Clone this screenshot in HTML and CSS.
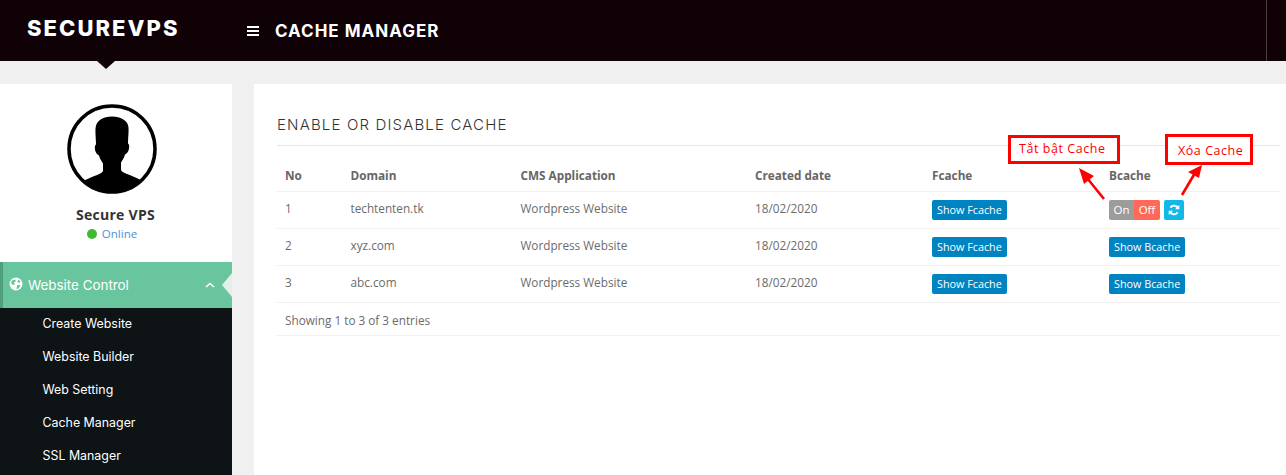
FILE: index.html
```html
<!DOCTYPE html>
<html lang="vi">
<head>
<meta charset="utf-8">
<title>Cache Manager</title>
<link rel="stylesheet" href="styles.css">
</head>
<body>
<header class="topbar">
  <div class="brand">SECUREVPS</div>
  <svg class="burger" viewBox="0 0 12 10" width="12" height="10"><path d="M0 1h12M0 5h12M0 9h12" stroke="#fff" stroke-width="2"/></svg>
  <div class="page-title">CACHE MANAGER</div>
  <div class="top-divider"></div>
</header>
<div class="layout">
  <aside class="sidebar">
    <div class="profile">
      <svg class="avatar" viewBox="0 0 90 90" width="90" height="90">
        <defs><clipPath id="avatar-clip"><circle cx="45" cy="45" r="43"/></clipPath></defs>
        <circle cx="45" cy="45" r="43" fill="#fff" stroke="#000" stroke-width="3.5"/>
        <path clip-path="url(#avatar-clip)" fill="#000" d="M45 12.500c-9 0-16 4-16.500 12-.3 5 .5 11 .5 16-1.500 1-1.500 4-.5 7 .7 2 2 3 3.500 4 1 4 3 6 4 8v7c0 2-3 3-6 4.500-5 2-11 4-15 7v14h60V77c-4-3-10-5-15-7-3-1.500-6-2.500-6-4.500v-7c1-2 3-4 4-8 1.500-1 2.800-2 3.500-4 1-3 1-6-.5-7 0-5 .8-11 .5-16C61 16.500 54 12.500 45 12.500z"/>
      </svg>
      <div class="profile-name">Secure VPS</div>
      <div class="profile-status"><span class="status-dot"></span>Online</div>
    </div>
    <nav class="menu">
      <div class="menu-head">
        <svg class="globe" viewBox="0 0 14 14" width="14" height="14"><circle cx="7" cy="7" r="6.500" fill="#fff"/><path fill="#68c59e" d="M3 3.500l3-1 1 1.500-2 1.500 1 2-2 .5-2-2zM9 2.500l2.500 2-1 1.500-2-1zM8 8l3.500 0-1.500 3-2.500 1.500z"/></svg>
        <span class="menu-label">Website Control</span>
        <svg class="chevron" viewBox="0 0 10 6" width="10" height="6"><path d="M1 5l4-3.500L9 5" fill="none" stroke="#fff" stroke-width="1.600"/></svg>
      </div>
      <ul class="submenu">
        <li>Create Website</li>
        <li>Website Builder</li>
        <li>Web Setting</li>
        <li>Cache Manager</li>
        <li>SSL Manager</li>
      </ul>
    </nav>
  </aside>
  <main class="panel">
    <h1 class="panel-title">ENABLE OR DISABLE CACHE</h1>
    <table class="data">
      <colgroup>
        <col class="c-no"><col class="c-domain"><col class="c-cms"><col class="c-date"><col class="c-f"><col>
      </colgroup>
      <thead>
        <tr><th>No</th><th>Domain</th><th>CMS Application</th><th>Created date</th><th>Fcache</th><th>Bcache</th></tr>
      </thead>
      <tbody>
        <tr><td>1</td><td>techtenten.tk</td><td>Wordpress Website</td><td>18/02/2020</td><td><span class="btn">Show Fcache</span></td>
          <td><div class="controls"><span class="toggle"><span class="on">On</span><span class="off">Off</span></span>
          <span class="refresh"><svg viewBox="0 0 12 12" width="12" height="12"><path d="M10.300 4.600A4.500 4.500 0 0 0 2.400 3.600M1.700 7.400A4.500 4.500 0 0 0 9.600 8.400" fill="none" stroke="#fff" stroke-width="1.900"/><path d="M11.300 1v4.300H7zM.7 11V6.700H5z" fill="#fff"/></svg></span></div></td></tr>
        <tr><td>2</td><td>xyz.com</td><td>Wordpress Website</td><td>18/02/2020</td><td><span class="btn">Show Fcache</span></td><td><span class="btn">Show Bcache</span></td></tr>
        <tr><td>3</td><td>abc.com</td><td>Wordpress Website</td><td>18/02/2020</td><td><span class="btn">Show Fcache</span></td><td><span class="btn">Show Bcache</span></td></tr>
      </tbody>
      <tfoot>
        <tr><td colspan="6">Showing 1 to 3 of 3 entries</td></tr>
      </tfoot>
    </table>
  </main>
</div>
<div class="note note-toggle">Tắt bật Cache</div>
<div class="note note-clear">Xóa Cache</div>
<svg class="arrows" width="1286" height="475" viewBox="0 0 1286 475">
  <path d="M1104 199L1087 178" stroke="#f00" stroke-width="2.600"/>
  <path d="M1079 168L1094 176 1084 184z" fill="#f00"/>
  <path d="M1182 195L1195 173" stroke="#f00" stroke-width="2.600"/>
  <path d="M1202 165L1199 178 1188 172z" fill="#f00"/>
</svg>
</body>
</html>
```
FILE: styles.css
```css
* { box-sizing: border-box; }
html, body { margin: 0; height: 475px; overflow: hidden; }
body { background: #f0f0f0; font-family: "Open Sans", sans-serif; color: #6b6b6b; position: relative; }

.topbar { height: 61px; background: #100106; color: #fff; display: flex; align-items: center; position: relative; }
.topbar::after { content: ""; position: absolute; left: 97px; top: 61px; border: 9px solid transparent; border-top: 8px solid #100106; border-bottom: 0; }
.brand { font-family: Inter, sans-serif; font-weight: 800; font-size: 22px; letter-spacing: 2.050px; margin-left: 27px; width: 220px; position: relative; top: -3px; white-space: nowrap; }
.burger { margin-right: 16px; }
.page-title { font-family: Inter, sans-serif; font-weight: 700; font-size: 17px; letter-spacing: 1px; flex: 1; }
.top-divider { width: 1px; height: 61px; background: #4a3d43; margin-right: 19px; }

.layout { display: grid; grid-template-columns: 232px 1fr; column-gap: 22px; padding-top: 23px; }
.sidebar { background: #fff; height: 391px; display: flex; flex-direction: column; }
.profile { height: 178px; display: flex; flex-direction: column; align-items: center; padding-top: 20px; }
.avatar { display: block; margin-right: 8px; }
.profile-name { font-weight: 700; font-size: 14px; color: #333; margin-top: 11px; line-height: 19px; letter-spacing: .3px; margin-right: 1px; }
.profile-status { font-size: 11.500px; color: #4a90d9; line-height: 16px; margin-top: 2px; margin-right: 8px; display: flex; align-items: center; }
.status-dot { width: 10px; height: 10px; border-radius: 50%; background: #3dba30; margin-right: 5px; }

.menu { flex: 1; background: #0e1316; }
.menu-head { height: 46px; background: #68c59e; border-left: 3px solid #4f9e7c; display: flex; align-items: center; color: #fff; position: relative; padding-left: 6px; }
.menu-head::after { content: ""; position: absolute; right: 0; top: 11px; border: 12px solid transparent; border-left: 0; border-right: 10px solid #e4eeea; }
.globe { margin-right: 5px; margin-top: -3px; }
.menu-label { font-family: Inter, sans-serif; font-size: 13.400px; flex: 1; }
.chevron { margin-right: 17px; }
.submenu { list-style: none; margin: 0; padding: 0 0 0 42.500px; color: #fff; font-family: Inter, sans-serif; font-size: 12.400px; }
.submenu li { height: 33px; line-height: 31px; }

.panel { background: #fff; height: 391px; padding: 0 6px 0 23px; }
.panel-title { font-family: Inter, sans-serif; font-weight: 300; font-size: 15px; letter-spacing: 1.160px; color: #333; margin: 0; height: 62px; padding-top: 31px; line-height: 20px; border-bottom: 1px solid #e6e6e6; }

.data { border-collapse: collapse; width: 100%; table-layout: fixed; font-size: 11.750px; }
.c-no { width: 65.500px; }
.c-domain { width: 170px; }
.c-cms { width: 234.500px; }
.c-date { width: 177px; }
.c-f { width: 177px; }
.data th, .data td { text-align: left; padding: 0 8px; border-bottom: 1px solid #f0f0f0; height: 37px; }
.data td { padding-bottom: 3px; }
.data th { font-weight: 700; height: 45px; padding-top: 14px; color: #666; }
.data tfoot td { height: 33px; padding-top: 2px; padding-bottom: 0; }
.btn { display: inline-block; background: #0083c1; color: #fff; border-radius: 2px; font-size: 10.800px; line-height: 20px; padding: 0 5px; vertical-align: middle; margin-top: 3px; }
.controls { display: flex; align-items: center; gap: 4px; margin-top: 3px; }
.toggle { display: flex; border-radius: 2px; overflow: hidden; font-size: 11.500px; color: #fff; line-height: 20px; }
.on { background: #9c9c9c; width: 25px; text-align: center; }
.off { background: #ff6a58; width: 26px; text-align: center; }
.refresh { width: 20px; height: 20px; border-radius: 2px; background: #12b9e8; display: flex; align-items: center; justify-content: center; }

.note { position: absolute; background: #fff; border: 3px solid #f00; color: #f00; font-family: "Open Sans", sans-serif; font-size: 12.500px; letter-spacing: .55px; }
.note-toggle { left: 1008px; top: 135px; width: 112px; height: 29px; padding-left: 8px; line-height: 22px; }
.note-clear { left: 1165px; top: 134px; width: 88px; height: 31px; padding-left: 10px; line-height: 27px; }
.arrows { position: absolute; left: 0; top: 0; pointer-events: none; }
```
